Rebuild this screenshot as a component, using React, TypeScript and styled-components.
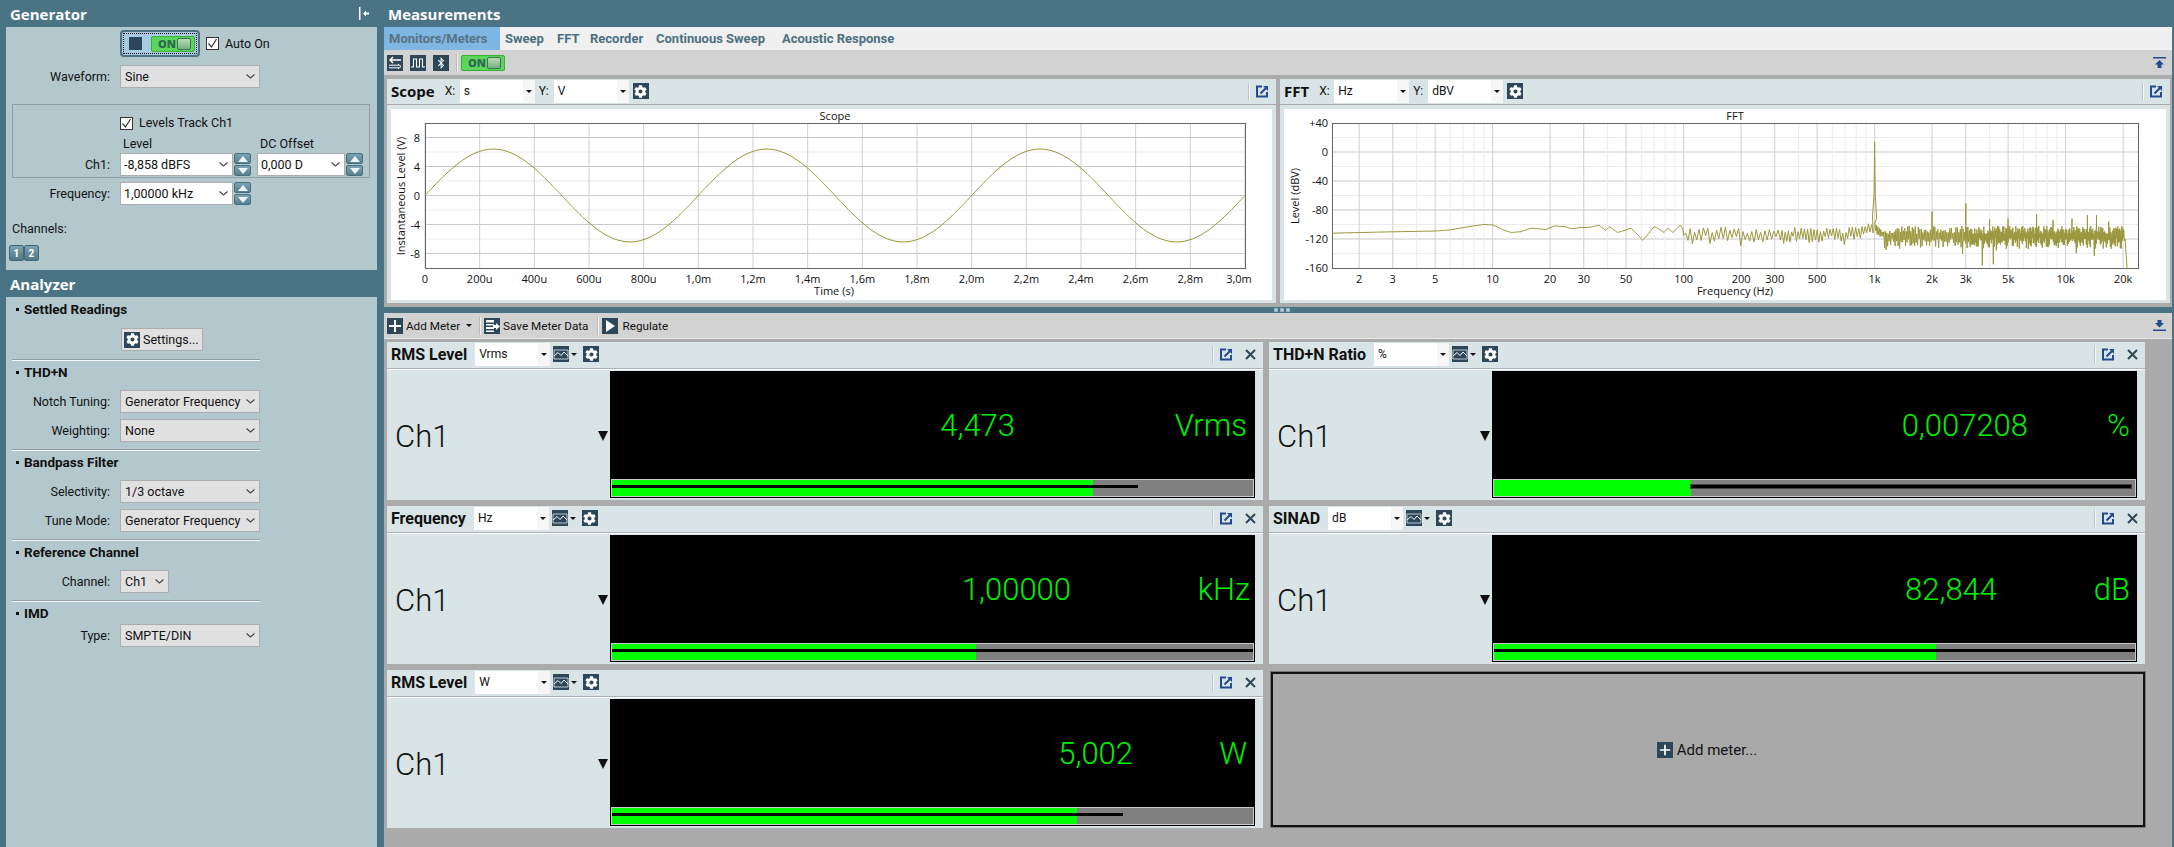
import React from "react";
import styled, { createGlobalStyle } from "styled-components";
import { FaCog, FaBluetoothB } from "react-icons/fa";

const FONT = `Roboto, "Open Sans", "Liberation Sans", sans-serif`;
const HEAD = `"Open Sans", "Noto Sans", "Liberation Sans", sans-serif`;

const Global = createGlobalStyle`
  html, body { margin: 0; padding: 0; background: #4a7484; }
  * { box-sizing: border-box; }
  body { font-family: ${FONT}; font-size: 12.5px; color: #111; }
`;

const Page = styled.div`
  width: 2174px; height: 847px; display: flex; background: #4a7484; overflow: hidden;
`;
const Sidebar = styled.aside`
  width: 377px; flex: none; display: flex; flex-direction: column;
`;
const SectionHeader = styled.header`
  height: 27px; flex: none; display: flex; align-items: center; justify-content: space-between;
  padding: 0 8px 0 10px; color: #fff; font-family: ${HEAD}; font-weight: 700; font-size: 15px;
`;
const SidePanel = styled.section<{ $height?: number }>`
  margin-left: 6px; background: #b3c8cd;
  ${(p) => (p.$height ? `height: ${p.$height}px; flex: none;` : "flex: 1;")}
`;
const GeneratorBody = styled.div`padding-top: 3px;`;
const PowerRow = styled.div`
  display: flex; align-items: center; margin-left: 114px; height: 27px;
`;
const PowerButton = styled.div`
  width: 80px; height: 27px; display: flex; align-items: center; padding-left: 7px; gap: 9px;
  background: #a6cbe3; border: 2px solid #4a7484; border-radius: 4px;
  outline: 1px dotted #000; outline-offset: -4px;
`;
const StopSquare = styled.div`width: 13px; height: 13px; background: #2c4759;`;
const OnToggle = styled.div`
  width: 44px; height: 16px; flex: none; display: flex; align-items: center; justify-content: space-between;
  padding: 0 3px 0 6px; border-radius: 2px; background: #5bd65b; border: 1px solid #38b038;
  font-family: ${HEAD}; font-size: 11px; font-weight: 800; color: #2f6a52; line-height: 1;
`;
const OnLed = styled.div`
  width: 14px; height: 12px; background: linear-gradient(#b8dcb0, #76b082);
  border: 1px solid #3f6f55; border-radius: 2px;
`;
const CheckRow = styled.label<{ $ml?: number }>`
  display: flex; align-items: center; gap: 6px; margin-left: ${(p) => p.$ml ?? 0}px; line-height: 16px;
`;
const CheckBox = styled.span`
  width: 13px; height: 13px; flex: none; display: flex; background: #fff; border: 1px solid #333;
`;
const FormRow = styled.div<{ $mt?: number }>`
  display: flex; align-items: center; height: 23px; margin-top: ${(p) => p.$mt ?? 0}px;
`;
const FieldLabel = styled.span<{ $w?: number }>`
  width: ${(p) => p.$w ?? 104}px; margin-right: 10px; flex: none; text-align: right; white-space: nowrap;
`;
const SelectBox = styled.div<{ $w: number; $light?: boolean }>`
  width: ${(p) => p.$w}px; height: 23px; flex: none; display: flex; align-items: center; justify-content: space-between;
  padding: 0 4px 0 ${(p) => (p.$light ? 3 : 4)}px; white-space: nowrap;
  background: ${(p) => (p.$light ? "#fff" : "#e1e1e1")}; border: 1px solid #adadad;
`;
const GroupBox = styled.fieldset`
  margin: 16px 0 0 6px; padding: 10px 0 0 0; width: 358px; height: 74px; border: 1px solid #8f9ea2; min-width: 0;
`;
const ColumnLabels = styled.div`
  display: flex; height: 19px; margin-top: 3px; margin-left: 110px; align-items: center;
  & > span:first-child { width: 137px; }
`;
const Stepper = styled.div`
  width: 17px; height: 23px; margin-left: 1px; flex: none; display: flex; flex-direction: column; gap: 1px;
`;
const StepButton = styled.div`
  flex: 1; display: flex; align-items: center; justify-content: center; border-radius: 2px;
  background: linear-gradient(#7fa2af, #57808f); border: 1px solid #47707f;
`;
const Gap = styled.div<{ $w: number }>`width: ${(p) => p.$w}px; flex: none;`;
const ChannelsLabel = styled.div`
  margin: 16px 0 0 6px; height: 16px; line-height: 16px;
`;
const ChannelButtons = styled.div`display: flex; margin: 8px 0 0 3px;`;
const ChannelButton = styled.div`
  width: 15px; height: 16px; display: flex; align-items: center; justify-content: center;
  background: linear-gradient(#7fa2af, #4f7888); border: 1px solid #3f6878; border-radius: 2px;
  color: #fff; font-size: 10px; font-weight: 800;
`;
const AnalyzerBody = styled.div`padding-top: 1px;`;
const GroupHeading = styled.h3`
  margin: 0; height: 22px; display: flex; align-items: center; padding: 1px 0 0 10px; gap: 5px;
  font-size: 13.5px; font-weight: 700; line-height: 1;
  &::before { content: ""; width: 3px; height: 3px; background: #111; }
`;
const Fields = styled.div<{ $mt?: number }>`
  display: flex; flex-direction: column; gap: 6px; margin-top: ${(p) => p.$mt ?? 7}px;
`;
const SettingsRow = styled.div`margin: 8px 0 0 115px; display: flex;`;
const SettingsButton = styled.div`
  width: 82px; height: 23px; display: flex; align-items: center; gap: 3px; padding-left: 2px;
  background: #e1e1e1; border: 1px solid #adadad;
`;
const Divider = styled.hr<{ $mt?: number }>`
  margin: ${(p) => p.$mt ?? 7}px 0 0 6px; width: 248px; height: 2px; border: 0;
  border-top: 1px solid #8f9ea2; border-bottom: 1px solid #f4f8f8;
`;

const Main = styled.main`
  flex: 1; margin-left: 7px; margin-right: 2px; display: flex; flex-direction: column; min-width: 0;
`;
const MeasureHeader = styled(SectionHeader)`padding-left: 4px;`;
const TabBar = styled.nav`
  height: 23px; flex: none; display: flex; align-items: stretch; background: #f0f0f0;
`;
const Tab = styled.div<{ $active?: boolean; $w: number }>`
  width: ${(p) => p.$w}px; display: flex; align-items: center; padding-left: 5px;
  font-size: 13px; font-weight: 700; white-space: nowrap; color: ${(p) => (p.$active ? "#5b7282" : "#4b7081")};
  background: ${(p) => (p.$active ? "#7eb6e4" : "transparent")};
`;
const Toolbar = styled.div<{ $h: number }>`
  height: ${(p) => p.$h}px; flex: none; display: flex; align-items: center; padding: 0 6px 0 3px; background: #d2d2d2;
`;
const Spacer = styled.div`flex: 1;`;
const ToolSep = styled.div<{ $ml: number; $mr: number }>`
  width: 1px; height: 18px; flex: none; background: #f3f3f3; box-shadow: -1px 0 0 #bbb;
  margin: 0 ${(p) => p.$mr}px 0 ${(p) => p.$ml}px;
`;
const Tile = styled.div<{ $size?: number; $ml?: number }>`
  width: ${(p) => p.$size ?? 16}px; height: ${(p) => p.$size ?? 16}px; flex: none;
  display: flex; align-items: center; justify-content: center;
  margin-left: ${(p) => p.$ml ?? 0}px; background: #2d4759; color: #fff;
`;
const ToolText = styled.span<{ $ml?: number }>`
  margin-left: ${(p) => p.$ml ?? 3}px; white-space: nowrap; font-size: 11.7px;
`;
const ChartsArea = styled.div`
  height: 232px; flex: none; background: #ababab; padding: 4px 2px 4px 3px;
  display: grid; grid-template-columns: 889px 890px; column-gap: 4px;
`;
const ChartPanel = styled.section`
  background: #d8e4e6; display: flex; flex-direction: column; height: 224px;
`;
const PanelHeader = styled.div`
  height: 26px; flex: none; display: flex; align-items: center; padding: 0 7px 1px 4px;
  background: #d8e4e6; border-bottom: 1px solid #a9a9a9;
`;
const ChartTitle = styled.span`font-family: ${HEAD}; font-size: 15px; font-weight: 700; margin-right: 10px; white-space: nowrap;`;
const AxisLabel = styled.span`font-size: 12px; width: 15px; flex: none; white-space: nowrap;`;
const Combo = styled.div<{ $mr?: number }>`
  width: 75px; height: 23px; flex: none; display: flex; align-items: center; justify-content: space-between;
  margin-right: ${(p) => p.$mr ?? 4}px; padding-left: 4px; background: #fff; font-size: 12px;
`;
const ComboArrow = styled.span`
  width: 12px; height: 100%; display: flex; align-items: center; justify-content: center; background: #f6f6f6;
  &::after { content: ""; border: 3px solid transparent; border-top: 3px solid #111; margin-top: 3px; }
`;
const HeaderSep = styled.div`
  width: 1px; height: 17px; background: #f4f8f8; box-shadow: -1px 0 0 #b8c4c6; margin-right: 6px;
`;
const ChartCanvas = styled.div`
  margin: 4px 4px 0; height: 191px; background: #fff;
`;
const ChartSvg = styled.svg`display: block;`;
const ChartLabel = styled.text`font-family: ${HEAD}; font-size: 11px; fill: #111;`;
const Splitter = styled.div`
  height: 6px; flex: none; display: flex; align-items: center; justify-content: center; gap: 4px; padding-left: 7px; background: #4a7484;
  & > i { width: 2px; height: 2px; background: #bcd0d8; outline: 1px solid #8fb0bc; }
`;
const MeterArea = styled.div`
  flex: 1; background: #ababab; padding: 3px 0 0 3px; display: grid;
  grid-template-columns: 876px 876px; grid-auto-rows: 158px; gap: 6px; align-content: start;
  border-top: 1px solid #e9e9e9;
`;
const MeterCard = styled.section`background: #d8e4e6; display: flex; flex-direction: column;`;
const MeterHeader = styled.div`
  height: 27px; flex: none; display: flex; align-items: center; padding: 0 7px 2px 4px;
  border-bottom: 1px solid #aab4b6; box-shadow: 0 1px 0 #fff;
`;
const MeterTitle = styled.span`font-size: 16px; font-weight: 700; margin-right: 8px; white-space: nowrap;`;
const DropIcon = styled.div`
  display: flex; align-items: center; margin-right: 6px;
  &::after { content: ""; border: 3px solid transparent; border-top: 3px solid #111; margin: 3px 0 0 2px; }
`;
const MeterBody = styled.div`
  flex: 1; display: flex; padding: 2px 8px 2px 0;
`;
const ChannelCol = styled.div`
  width: 223px; flex: none; display: flex; align-items: center; justify-content: space-between; padding: 3px 2px 0 8px;
`;
const ChannelName = styled.span`font-size: 31px; font-weight: 300; color: #111; line-height: 1;`;
const ChannelCaret = styled.span`
  width: 0; height: 0; border: 5.5px solid transparent; border-top: 10px solid #111; border-bottom: 0;
`;
const Display = styled.div`
  width: 645px; height: 127px; background: #000; display: flex; flex-direction: column; color: #00f000;
`;
const Readout = styled.div<{ $trail: number }>`
  flex: 1; display: grid; grid-template-columns: 1fr ${(p) => p.$trail}px; align-items: center; padding-top: 1px;
`;
const ReadValue = styled.span`font-size: 31px; font-weight: 300; text-align: right; line-height: 1;`;
const ReadUnit = styled.span<{ $pr: number }>`
  font-size: 31px; font-weight: 300; text-align: right; padding-right: ${(p) => p.$pr}px; line-height: 1;
`;
const BarTrack = styled.div`
  position: relative; height: 18px; margin: 0 1px 1px; background: #808080; border: 1px solid #c9c9c9; flex: none;
`;
const BarFill = styled.div`position: absolute; left: 0; top: 0; bottom: 0; background: #00ff00;`;
const BarPeak = styled.div<{ $halo?: boolean }>`
  position: absolute; top: 5px; height: 3px; background: #000;
  ${(p) => (p.$halo ? "box-shadow: 0 0 0 1px #444;" : "")}
`;
const AddCard = styled.div`
  background: #a9a9a9; border: 2px solid #111; display: flex; align-items: center; justify-content: center;
  gap: 4px; margin: 2px 0 1px 2px; padding-right: 2px; box-shadow: 0 0 0 1px #777; font-size: 15px;
`;

const Chevron = () => (
  <svg width="9" height="5" viewBox="0 0 9 5"><path d="M0.500 0.500l4 3.500 4-3.500" fill="none" stroke="#444" strokeWidth="1.100" /></svg>
);
const Check = () => (
  <svg width="11" height="11" viewBox="0 0 11 11"><path d="M1.500 5.500l3 3.500 5-8" fill="none" stroke="#333" strokeWidth="1.2" /></svg>
);
const Tri = ({ up }: { up?: boolean }) => (
  <svg width="10" height="6" viewBox="0 0 10 6"><path d={up ? "M0 6L5 0l5 6z" : "M0 0h10L5 6z"} fill="#eef3f4" /></svg>
);
const PinIcon = () => (
  <svg width="10" height="13" viewBox="0 0 10 13"><path d="M0 0h1.500v13H0z" fill="#fff" /><path d="M4 6.500L7 3.500v2h3v2H7v2z" fill="#fff" /></svg>
);
const Plus = ({ s = 14 }: { s?: number }) => (
  <svg width={s} height={s} viewBox="0 0 14 14"><path d="M7 1v12M1 7h12" stroke="#fff" strokeWidth="2" /></svg>
);
const SwapIcon = () => (
  <svg width="14" height="14" viewBox="0 0 14 14" fill="none"><path d="M13 4H2M5 1L2 4l3 3" stroke="#fff" strokeWidth="1.500" /><path d="M1 9.200h10M1 11.800h10M10 8l3 2.500-3 2.500" stroke="#fff" strokeWidth="1" /></svg>
);
const WaveIcon = () => (
  <svg width="14" height="12" viewBox="0 0 14 12" fill="none"><path d="M0 10h2.500V2h3v8h3V2h3v8H14" stroke="#fff" strokeWidth="1.100" /></svg>
);
const SaveIcon = () => (
  <svg width="15" height="14" viewBox="0 0 15 14" fill="#fff"><path d="M1 1h8v2.500H1zM1 5h8v1.500H1zM1 8h8v2H1zM1 11.500h8V13H1z" /><path d="M8 6h3V4l4 3.500-4 3.500V9H8z" /></svg>
);
const PlayIcon = () => (
  <svg width="10" height="12" viewBox="0 0 10 12"><path d="M1 0l9 6-9 6z" fill="#fff" /></svg>
);
const TrendIcon = () => (
  <svg width="16" height="16" viewBox="0 0 16 16" fill="none"><path d="M1 4h14v9H1z" stroke="#dfe9ec" strokeWidth="0.8" /><path d="M1 10l4-3.500 3 3 3-3.500 4 4" stroke="#fff" strokeWidth="1" /></svg>
);
const PopOut = () => (
  <svg width="13" height="13" viewBox="0 0 13 13" fill="none"><path d="M6 1.500H1v10h10V7" stroke="#24498c" strokeWidth="2" /><path d="M4.500 8.500L10.500 2.500" stroke="#24498c" strokeWidth="2" /><path d="M7 1h5v5z" fill="#24498c" /></svg>
);
const CloseX = () => (
  <svg width="11" height="11" viewBox="0 0 11 11"><path d="M1 1l9 9M10 1l-9 9" stroke="#2d4759" strokeWidth="2" /></svg>
);
const PanelDock = ({ down }: { down?: boolean }) => (
  <svg width="13" height="11" viewBox="0 0 13 11" fill="#24498c">
    {down ? <path d="M0 9.500h13V11H0zM4.500 0h4v3H11L6.500 7.500 2 3h2.500z" /> : <path d="M0 0h13v1.500H0zM6.500 3L11 7.500H8.500V11h-4V7.500H2z" />}
  </svg>
);
const Gear = ({ s = 13 }: { s?: number }) => <FaCog size={s} />;

const Stepbox = () => (
  <Stepper>
    <StepButton><Tri up /></StepButton>
    <StepButton><Tri /></StepButton>
  </Stepper>
);

/* ---- Scope ---- */
const TRACE = "#9a983e";
const SCOPE = { x: 34, y: 14, w: 820, h: 145 };
const scopeX = ["0", "200u", "400u", "600u", "800u", "1,0m", "1,2m", "1,4m", "1,6m", "1,8m", "2,0m", "2,2m", "2,4m", "2,6m", "2,8m", "3,0m"];

function sinePath() {
  const pts: string[] = [];
  for (let i = 0; i <= SCOPE.w; i++) {
    const t = (i / SCOPE.w) * 3;
    const v = 6.4 * Math.sin(2 * Math.PI * t);
    pts.push(`${(SCOPE.x + i).toFixed(1)},${(SCOPE.y + SCOPE.h / 2 - v * (SCOPE.h / 20)).toFixed(1)}`);
  }
  return pts.join(" ");
}

const ScopeChart = () => (
  <ChartSvg width={881} height={191}>
    {[-6, -2, 2, 6].map((v) => (
      <line key={v} x1={SCOPE.x} x2={SCOPE.x + SCOPE.w} y1={SCOPE.y + SCOPE.h / 2 - v * 7.25} y2={SCOPE.y + SCOPE.h / 2 - v * 7.25} stroke="#ececec" />
    ))}
    {[-8, -4, 0, 4, 8].map((v) => (
      <line key={v} x1={SCOPE.x} x2={SCOPE.x + SCOPE.w} y1={SCOPE.y + SCOPE.h / 2 - v * 7.25} y2={SCOPE.y + SCOPE.h / 2 - v * 7.25} stroke="#c9c9c9" />
    ))}
    {scopeX.map((_, i) => (
      <line key={i} x1={SCOPE.x + (i * SCOPE.w) / 15} x2={SCOPE.x + (i * SCOPE.w) / 15} y1={SCOPE.y} y2={SCOPE.y + SCOPE.h} stroke="#cfcfcf" />
    ))}
    <rect x={SCOPE.x + 0.5} y={SCOPE.y + 0.5} width={SCOPE.w} height={SCOPE.h} fill="none" stroke="#666" />
    <polyline points={sinePath()} fill="none" stroke={TRACE} strokeWidth="1" />
    <ChartLabel x={444} y={11} textAnchor="middle">Scope</ChartLabel>
    {[-8, -4, 0, 4, 8].map((v) => (
      <ChartLabel key={v} x={SCOPE.x - 5} y={SCOPE.y + SCOPE.h / 2 - v * 7.25 + 4} textAnchor="end">{v}</ChartLabel>
    ))}
    {scopeX.map((l, i) => (
      <ChartLabel key={l} x={i === 15 ? SCOPE.x + SCOPE.w - 6 : SCOPE.x + (i * SCOPE.w) / 15} y={174} textAnchor="middle">{l}</ChartLabel>
    ))}
    <ChartLabel x={443} y={186} textAnchor="middle">Time (s)</ChartLabel>
    <ChartLabel transform="translate(14 87) rotate(-90)" textAnchor="middle">Instantaneous Level (V)</ChartLabel>
  </ChartSvg>
);

/* ---- FFT ---- */
const FFT = { x: 48, y: 14, w: 806, h: 145, decade: 191, log0: 0.159 };
const fx = (f: number) => FFT.x + (Math.log10(f) - FFT.log0) * FFT.decade;
const fy = (db: number) => FFT.y + (40 - db) * (FFT.h / 200);
const fftMajor = [2, 3, 5, 10, 20, 30, 50, 100, 200, 300, 500, 1000, 2000, 3000, 5000, 10000, 20000];
const fftMinor = [4, 6, 7, 8, 9, 40, 60, 70, 80, 90, 400, 600, 700, 800, 900, 4000, 6000, 7000, 8000, 9000];
const fftLabel = (f: number) => (f >= 1000 ? `${f / 1000}k` : `${f}`);

const lowCurve: [number, number][] = [
  [1.44, -112], [3, -110], [5, -109], [6, -107.5], [7.5, -103], [9, -100], [10, -100.5], [11.5, -108],
  [12.5, -111], [14, -110], [16, -105], [19, -107], [21, -102], [24, -103], [26, -106], [29, -104], [32, -104],
  [36, -101], [39, -108], [41, -103], [45, -111], [48, -109], [53, -105], [58, -115], [61, -122], [64, -116],
  [70, -103], [74, -106], [79, -111], [83, -105], [88, -111], [96, -101], [100, -108],
];
const spikes: [number, number][] = [
  [2000, -82], [3000, -71], [4000, -93], [5000, -92], [7050, -86], [10800, -92], [13000, -87], [14500, -87], [8600, -94], [16800, -96],
];

function fftPath() {
  let seed = 12345;
  const rnd = () => {
    seed = (seed * 1664525 + 1013904223) % 4294967296;
    return seed / 4294967296;
  };
  const pts: string[] = [];
  const push = (f: number, db: number) => pts.push(`${fx(f).toFixed(1)},${fy(Math.max(db, -162)).toFixed(1)}`);
  for (let i = 0; i < lowCurve.length - 1; i++) {
    const [f0, d0] = lowCurve[i];
    const [f1, d1] = lowCurve[i + 1];
    for (let k = 0; k < 4; k++) {
      const a = k / 4;
      push(f0 * Math.pow(f1 / f0, a), d0 + (d1 - d0) * a);
    }
  }
  const freqAt = (px: number) => Math.pow(10, 2 + px / FFT.decade);
  const lastPx = (Math.log10(20400) - 2) * FFT.decade;
  let px = 0;
  let odd = false;
  while (px < lastPx) {
    const f = freqAt(px);
    const lg = Math.log10(f);
    const hi = lg >= 3;
    const rel = Math.abs(lg - 3);
    let v: number;
    if (hi) {
      const base = rel < 0.05 ? -104 - rel * 200 : -115;
      const range = rel < 0.05 ? 5 : 11;
      v = odd ? base + 2 + rnd() * range : base - 3 - rnd() * range * 1.4;
      if (!odd && rnd() < 0.05) v = base - 14 - rnd() * 28;
    } else {
      const near = lg > 2.85 ? (lg - 2.85) * 60 : 0;
      const base = -113 + near;
      const range = 3 + (1 - (lg - 2)) * 7 + (lg > 2.5 ? 3 : 0);
      v = odd ? base + 1 + rnd() * range : base - 2 - rnd() * range * 1.3;
      if (!odd && lg > 2.2 && rnd() < 0.08) v = base - 10 - rnd() * 14;
    }
    push(f, v);
    for (const [sf, sd] of spikes) {
      const d = fx(sf) - fx(f);
      if (d >= 0 && d < (hi ? 0.45 : 1.8)) { push(sf, sd); push(sf * 1.001, -118); }
    }
    px += hi ? (lg > 3.5 ? 0.5 : 0.75) : lg > 2.5 ? 1.6 : 2.2;
    odd = !odd;
    if (f < 1000 && freqAt(px) >= 1000) {
      push(975, -88); push(992, -60); push(997, -20); push(1000, 14); push(1003, -20); push(1008, -60); push(1025, -92);
    }
  }
  push(20500, -120); push(20700, -140); push(21000, -162);
  return pts.join(" ");
}

const FftChart = () => (
  <ChartSvg width={880} height={191}>
    {[20, -20, -60, -100, -140].map((d) => (
      <line key={d} x1={FFT.x} x2={FFT.x + FFT.w} y1={fy(d)} y2={fy(d)} stroke="#ececec" />
    ))}
    {[0, -40, -80, -120].map((d) => (
      <line key={d} x1={FFT.x} x2={FFT.x + FFT.w} y1={fy(d)} y2={fy(d)} stroke="#c9c9c9" />
    ))}
    {fftMinor.map((f) => <line key={f} x1={fx(f)} x2={fx(f)} y1={FFT.y} y2={FFT.y + FFT.h} stroke="#ececec" />)}
    {fftMajor.map((f) => <line key={f} x1={fx(f)} x2={fx(f)} y1={FFT.y} y2={FFT.y + FFT.h} stroke="#cfcfcf" />)}
    <rect x={FFT.x + 0.5} y={FFT.y + 0.5} width={FFT.w} height={FFT.h} fill="none" stroke="#666" />
    <polyline points={fftPath()} fill="none" stroke={TRACE} strokeWidth="1" />
    <ChartLabel x={451} y={11} textAnchor="middle">FFT</ChartLabel>
    {[40, 0, -40, -80, -120, -160].map((d) => (
      <ChartLabel key={d} x={FFT.x - 4} y={fy(d) + 4} textAnchor="end">{d > 0 ? `+${d}` : d}</ChartLabel>
    ))}
    {fftMajor.map((f) => (
      <ChartLabel key={f} x={fx(f)} y={174} textAnchor="middle">{fftLabel(f)}</ChartLabel>
    ))}
    <ChartLabel x={451} y={186} textAnchor="middle">Frequency (Hz)</ChartLabel>
    <ChartLabel transform="translate(15 87) rotate(-90)" textAnchor="middle">Level (dBV)</ChartLabel>
  </ChartSvg>
);

/* ---- Meters ---- */
type MeterData = {
  title: string; unit: string; value: string; readUnit: string; trail: number; unitPad: number;
  fill: number; peak: number; peakAfterFill?: boolean;
};
const meters: MeterData[] = [
  { title: "RMS Level", unit: "Vrms", value: "4,473", readUnit: "Vrms", trail: 240, unitPad: 8, fill: 0.75, peak: 0.82 },
  { title: "THD+N Ratio", unit: "%", value: "0,007208", readUnit: "%", trail: 109, unitPad: 7, fill: 0.308, peak: 0.993, peakAfterFill: true },
  { title: "Frequency", unit: "Hz", value: "1,00000", readUnit: "kHz", trail: 184, unitPad: 5, fill: 0.568, peak: 1 },
  { title: "SINAD", unit: "dB", value: "82,844", readUnit: "dB", trail: 140, unitPad: 7, fill: 0.69, peak: 1 },
  { title: "RMS Level", unit: "W", value: "5,002", readUnit: "W", trail: 122, unitPad: 8, fill: 0.7255, peak: 0.797 },
];

const Meter = ({ m }: { m: MeterData }) => (
  <MeterCard>
    <MeterHeader>
      <MeterTitle>{m.title}</MeterTitle>
      <Combo $mr={3}>{m.unit}<ComboArrow /></Combo>
      <DropIcon><Tile><TrendIcon /></Tile></DropIcon>
      <Tile><Gear /></Tile>
      <Spacer />
      <HeaderSep />
      <PopOut />
      <Gap $w={12} />
      <CloseX />
    </MeterHeader>
    <MeterBody>
      <ChannelCol>
        <ChannelName>Ch1</ChannelName>
        <ChannelCaret />
      </ChannelCol>
      <Display>
        <Readout $trail={m.trail}>
          <ReadValue>{m.value}</ReadValue>
          <ReadUnit $pr={m.unitPad}>{m.readUnit}</ReadUnit>
        </Readout>
        <BarTrack>
          <BarFill style={{ width: `${m.fill * 100}%` }} />
          <BarPeak
            $halo={m.peakAfterFill}
            style={{
              left: m.peakAfterFill ? `${m.fill * 100}%` : 0,
              width: `${(m.peak - (m.peakAfterFill ? m.fill : 0)) * 100}%`,
            }}
          />
        </BarTrack>
      </Display>
    </MeterBody>
  </MeterCard>
);

const SelectField = ({ label, value, w = 140 }: { label: string; value: string; w?: number }) => (
  <FormRow>
    <FieldLabel>{label}</FieldLabel>
    <SelectBox $w={w}>{value}<Chevron /></SelectBox>
  </FormRow>
);

export default function App() {
  return (
    <Page>
      <Global />
      <Sidebar>
        <SectionHeader>Generator<PinIcon /></SectionHeader>
        <SidePanel $height={243}>
          <GeneratorBody>
            <PowerRow>
              <PowerButton>
                <StopSquare />
                <OnToggle>ON<OnLed /></OnToggle>
              </PowerButton>
              <CheckRow $ml={6}><CheckBox><Check /></CheckBox>Auto On</CheckRow>
            </PowerRow>
            <FormRow $mt={8}>
              <FieldLabel>Waveform:</FieldLabel>
              <SelectBox $w={140}>Sine<Chevron /></SelectBox>
            </FormRow>
            <GroupBox>
              <CheckRow $ml={107}><CheckBox><Check /></CheckBox>Levels Track Ch1</CheckRow>
              <ColumnLabels><span>Level</span><span>DC Offset</span></ColumnLabels>
              <FormRow>
                <FieldLabel $w={97}>Ch1:</FieldLabel>
                <SelectBox $w={113} $light>-8,858 dBFS<Chevron /></SelectBox>
                <Stepbox />
                <Gap $w={6} />
                <SelectBox $w={88} $light>0,000 D<Chevron /></SelectBox>
                <Stepbox />
              </FormRow>
            </GroupBox>
            <FormRow $mt={4}>
              <FieldLabel>Frequency:</FieldLabel>
              <SelectBox $w={113} $light>1,00000 kHz<Chevron /></SelectBox>
              <Stepbox />
            </FormRow>
            <ChannelsLabel>Channels:</ChannelsLabel>
            <ChannelButtons>
              <ChannelButton>1</ChannelButton>
              <ChannelButton>2</ChannelButton>
            </ChannelButtons>
          </GeneratorBody>
        </SidePanel>
        <SectionHeader>Analyzer</SectionHeader>
        <SidePanel>
          <AnalyzerBody>
            <GroupHeading>Settled Readings</GroupHeading>
            <SettingsRow>
              <SettingsButton><Tile><Gear /></Tile>Settings...</SettingsButton>
            </SettingsRow>
            <Divider $mt={8} />
            <GroupHeading>THD+N</GroupHeading>
            <Fields>
              <SelectField label="Notch Tuning:" value="Generator Frequency" />
              <SelectField label="Weighting:" value="None" />
            </Fields>
            <Divider />
            <GroupHeading>Bandpass Filter</GroupHeading>
            <Fields>
              <SelectField label="Selectivity:" value="1/3 octave" />
              <SelectField label="Tune Mode:" value="Generator Frequency" />
            </Fields>
            <Divider />
            <GroupHeading>Reference Channel</GroupHeading>
            <Fields>
              <SelectField label="Channel:" value="Ch1" w={49} />
            </Fields>
            <Divider />
            <GroupHeading>IMD</GroupHeading>
            <Fields $mt={0}>
              <SelectField label="Type:" value="SMPTE/DIN" />
            </Fields>
          </AnalyzerBody>
        </SidePanel>
      </Sidebar>
      <Main>
        <MeasureHeader>Measurements</MeasureHeader>
        <TabBar>
          <Tab $active $w={116}>Monitors/Meters</Tab>
          <Tab $w={52}>Sweep</Tab>
          <Tab $w={33}>FFT</Tab>
          <Tab $w={66}>Recorder</Tab>
          <Tab $w={126}>Continuous Sweep</Tab>
          <Tab $w={130}>Acoustic Response</Tab>
        </TabBar>
        <Toolbar $h={25}>
          <Tile><SwapIcon /></Tile>
          <Tile $ml={7}><WaveIcon /></Tile>
          <Tile $ml={7}><FaBluetoothB size={12} /></Tile>
          <ToolSep $ml={8} $mr={3} />
          <OnToggle>ON<OnLed /></OnToggle>
          <Spacer />
          <PanelDock />
        </Toolbar>
        <ChartsArea>
          <ChartPanel>
            <PanelHeader>
              <ChartTitle>Scope</ChartTitle>
              <AxisLabel>X:</AxisLabel>
              <Combo>s<ComboArrow /></Combo>
              <AxisLabel>Y:</AxisLabel>
              <Combo>V<ComboArrow /></Combo>
              <Tile><Gear /></Tile>
              <Spacer />
              <HeaderSep />
              <PopOut />
            </PanelHeader>
            <ChartCanvas><ScopeChart /></ChartCanvas>
          </ChartPanel>
          <ChartPanel>
            <PanelHeader>
              <ChartTitle>FFT</ChartTitle>
              <AxisLabel>X:</AxisLabel>
              <Combo>Hz<ComboArrow /></Combo>
              <AxisLabel>Y:</AxisLabel>
              <Combo>dBV<ComboArrow /></Combo>
              <Tile><Gear /></Tile>
              <Spacer />
              <HeaderSep />
              <PopOut />
            </PanelHeader>
            <ChartCanvas><FftChart /></ChartCanvas>
          </ChartPanel>
        </ChartsArea>
        <Splitter><i /><i /><i /></Splitter>
        <Toolbar $h={25}>
          <Tile><Plus /></Tile>
          <ToolText>Add Meter</ToolText>
          <Gap $w={4} />
          <DropIcon />
          <ToolSep $ml={2} $mr={3} />
          <Tile><SaveIcon /></Tile>
          <ToolText>Save Meter Data</ToolText>
          <ToolSep $ml={10} $mr={3} />
          <Tile><PlayIcon /></Tile>
          <ToolText $ml={4}>Regulate</ToolText>
          <Spacer />
          <PanelDock down />
        </Toolbar>
        <MeterArea>
          {meters.map((m, i) => <Meter key={i} m={m} />)}
          <AddCard>
            <Tile><Plus s={12} /></Tile>
            Add meter...
          </AddCard>
        </MeterArea>
      </Main>
    </Page>
  );
}
